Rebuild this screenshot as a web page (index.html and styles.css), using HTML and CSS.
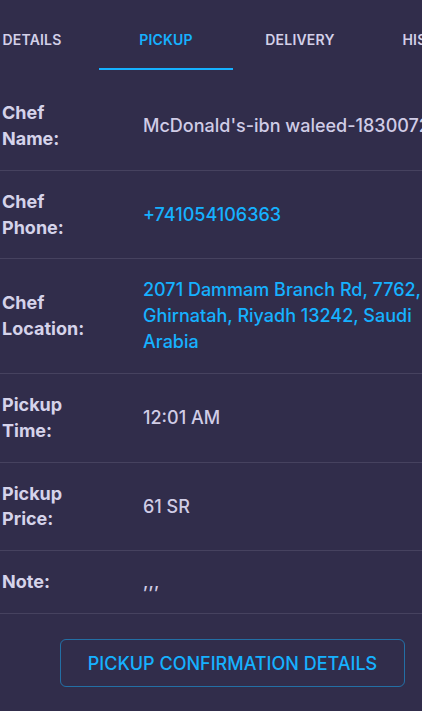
FILE: index.html
```html
<!DOCTYPE html>
<html lang="en">
<head>
    <meta charset="UTF-8">
    <meta name="viewport" content="width=device-width, initial-scale=1.0">
    <title>Order Pickup</title>
    <link rel="stylesheet" href="styles.css">
</head>
<body>
    <div class="tabs">
        <div class="tab">DETAILS</div>
        <div class="tab active">PICKUP</div>
        <div class="tab">DELIVERY</div>
        <div class="tab">HISTORY</div>
    </div>

    <div class="info-table">
        <div class="row">
            <div class="label">Chef<br>Name:</div>
            <div class="value nowrap">McDonald's-ibn waleed-18300725</div>
        </div>
        <div class="row">
            <div class="label">Chef<br>Phone:</div>
            <div class="value link">+741054106363</div>
        </div>
        <div class="row">
            <div class="label">Chef<br>Location:</div>
            <div class="value link">2071 Dammam Branch Rd, 7762, Ghirnatah, Riyadh 13242, Saudi Arabia</div>
        </div>
        <div class="row">
            <div class="label">Pickup<br>Time:</div>
            <div class="value">12:01 AM</div>
        </div>
        <div class="row">
            <div class="label">Pickup<br>Price:</div>
            <div class="value">61 SR</div>
        </div>
        <div class="row">
            <div class="label">Note:</div>
            <div class="value">,,,</div>
        </div>
    </div>

    <div class="actions">
        <button class="outline-btn">PICKUP CONFIRMATION DETAILS</button>
    </div>
</body>
</html>
```

FILE: styles.css
```css
body {
    margin: 0;
    background-color: #312d4b;
    font-family: Inter, "Noto Sans", sans-serif;
    color: #d3d0e8;
    overflow: hidden;
    width: 422px;
}

.tabs {
    display: flex;
    height: 70px;
    margin-left: -35px;
    overflow: hidden;
    width: 457px;
}

.tab {
    flex: 0 0 134px;
    box-sizing: border-box;
    padding-top: 31px;
    text-align: center;
    font-size: 14px;
    font-weight: 600;
    letter-spacing: 0.2px;
    color: #d3d0e8;
    white-space: nowrap;
}

.tab.active {
    color: #16b1ff;
    border-bottom: 2px solid #16b1ff;
}

.info-table {
    margin-top: 12px;
}

.row {
    display: grid;
    grid-template-columns: 141px 1fr;
    align-items: center;
    padding: 18px 0 18px 2px;
    border-bottom: 1px solid #46425f;
    font-size: 18px;
    line-height: 25.85px;
}

.label {
    font-weight: 700;
    color: #d5d3ea;
}

.value {
    color: #d0cce6;
    font-weight: 500;
}

.value.link {
    color: #16b1ff;
}

.value.nowrap {
    white-space: nowrap;
    overflow: hidden;
}

.actions {
    padding: 25px 0 0 60px;
}

.outline-btn {
    width: 345px;
    height: 48px;
    background: transparent;
    border: 1px solid rgba(22, 177, 255, 0.5);
    border-radius: 6px;
    color: #16b1ff;
    font-family: Inter, "Noto Sans", sans-serif;
    font-size: 18px;
    font-weight: 500;
}
```
